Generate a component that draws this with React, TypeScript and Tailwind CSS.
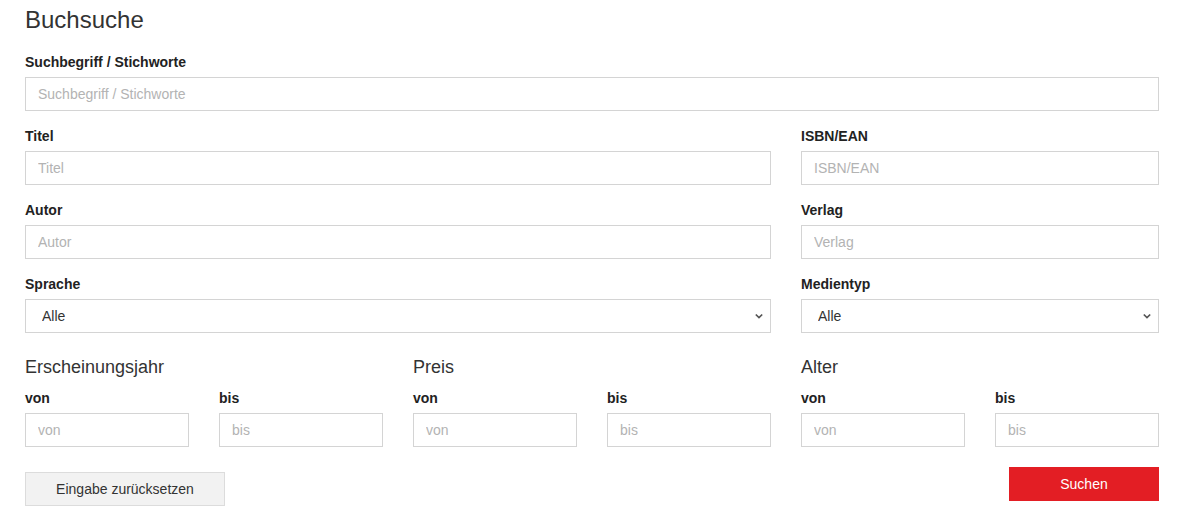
import React from "react";

const font = { fontFamily: '"Liberation Sans", Arial, sans-serif' };

function Label({ children }: { children: React.ReactNode }) {
  return (
    <label className="block text-[14px] leading-[18px] font-bold text-[#222] mb-[6px]">
      {children}
    </label>
  );
}

function TextField({ label, placeholder }: { label: string; placeholder?: string }) {
  return (
    <div className="mb-[16px]">
      <Label>{label}</Label>
      <input
        type="text"
        placeholder={placeholder ?? label}
        className="block w-full h-[34px] border border-[#d4d4d4] bg-white px-[12px] text-[14px] text-[#333] placeholder:text-[#b3b3b3] outline-none"
      />
    </div>
  );
}

function SelectField({ label }: { label: string }) {
  return (
    <div className="mb-[16px]">
      <Label>{label}</Label>
      <div className="relative">
        <select className="block w-full h-[34px] appearance-none border border-[#d4d4d4] bg-white pl-[16px] pr-8 text-[14px] text-[#333] outline-none">
          <option>Alle</option>
        </select>
        <svg
          className="absolute right-[7px] top-1/2 -translate-y-1/2 pointer-events-none"
          width="10"
          height="10"
          viewBox="0 0 10 10"
        >
          <path d="M1.8 3.5 L5 6.6 L8.2 3.5" fill="none" stroke="#555" strokeWidth="1.7" />
        </svg>
      </div>
    </div>
  );
}

function Range({ title }: { title: string }) {
  return (
    <div>
      <h2 className="text-[18px] leading-[22px] text-[#333] mb-[11px]">{title}</h2>
      <div className="grid grid-cols-2 gap-x-[30px]">
        <TextField label="von" />
        <TextField label="bis" />
      </div>
    </div>
  );
}

export default function App() {
  return (
    <div style={font} className="w-[1181px] h-[526px] bg-white pl-[25px] pr-[22px] pt-[6px]">
      <h1 className="text-[24px] leading-[28px] text-[#333] mb-[19px]">Buchsuche</h1>
      <TextField label="Suchbegriff / Stichworte" />
      <div className="grid grid-cols-3 gap-x-[30px]">
        <div className="col-span-2">
          <TextField label="Titel" />
        </div>
        <TextField label="ISBN/EAN" />
        <div className="col-span-2">
          <TextField label="Autor" />
        </div>
        <TextField label="Verlag" />
        <div className="col-span-2">
          <SelectField label="Sprache" />
        </div>
        <SelectField label="Medientyp" />
      </div>
      <div className="grid grid-cols-3 gap-x-[30px] mt-[7px]">
        <Range title="Erscheinungsjahr" />
        <Range title="Preis" />
        <Range title="Alter" />
      </div>
      <div className="flex justify-between items-start mt-[4px]">
        <button className="mt-[5px] w-[200px] h-[34px] border border-[#dcdcdc] bg-[#f2f2f2] text-[14px] text-[#333]">
          Eingabe zurücksetzen
        </button>
        <button className="w-[150px] h-[34px] bg-[#e31e24] text-[14px] text-white">
          Suchen
        </button>
      </div>
    </div>
  );
}
